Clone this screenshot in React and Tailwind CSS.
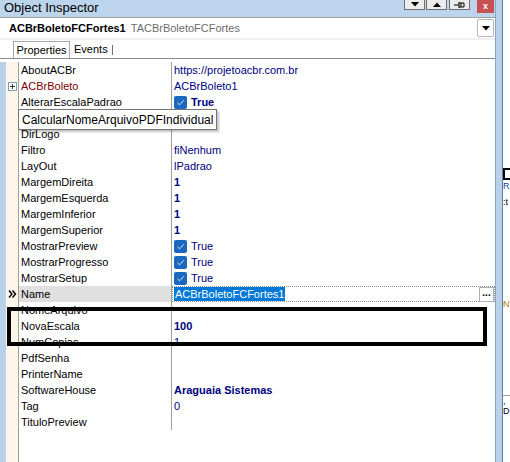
import React from 'react'

const font = { fontFamily: '"Liberation Sans", Arial, sans-serif' }

function Check({ bold }) {
  return (
    <span className="flex items-center gap-[4px]">
      <span className="w-[13px] h-[13px] rounded-[2px] bg-[#1a68c0] flex items-center justify-center">
        <svg width="9" height="9" viewBox="0 0 9 9">
          <path d="M1.5 4.8 L3.6 6.8 L7.6 2.4" stroke="#dfeaf7" strokeWidth="1" fill="none" />
        </svg>
      </span>
      <span className={bold ? 'font-bold' : ''}>True</span>
    </span>
  )
}

const rows = [
  { name: 'AboutACBr', value: 'https://projetoacbr.com.br' },
  { name: 'ACBrBoleto', value: 'ACBrBoleto1', red: true, plus: true },
  { name: 'AlterarEscalaPadrao', check: true, bold: true },
  { name: 'CalcularNomeArquivoPDFIndividual', hidden: true },
  { name: 'DirLogo' },
  { name: 'Filtro', value: 'fiNenhum' },
  { name: 'LayOut', value: 'lPadrao' },
  { name: 'MargemDireita', value: '1', bold: true },
  { name: 'MargemEsquerda', value: '1', bold: true },
  { name: 'MargemInferior', value: '1', bold: true },
  { name: 'MargemSuperior', value: '1', bold: true },
  { name: 'MostrarPreview', check: true },
  { name: 'MostrarProgresso', check: true },
  { name: 'MostrarSetup', check: true },
  { name: 'Name', value: 'ACBrBoletoFCFortes1', selected: true },
  { name: 'NomeArquivo' },
  { name: 'NovaEscala', value: '100', bold: true },
  { name: 'NumCopias', value: '1' },
  { name: 'PdfSenha' },
  { name: 'PrinterName' },
  { name: 'SoftwareHouse', value: 'Araguaia Sistemas', bold: true },
  { name: 'Tag', value: '0' },
  { name: 'TituloPreview' },
]

function Row({ r }) {
  return (
    <div className="flex h-[16px] text-[11px] leading-[16px]">
      <div className="w-[13px] shrink-0 bg-[#fdf6e9] border-r border-[#a0a0a0] flex items-center justify-center">
        {r.plus && (
          <svg width="9" height="9" viewBox="0 0 9 9">
            <rect x="0.5" y="0.5" width="8" height="8" fill="#fff" stroke="#7f9db9" />
            <path d="M2 4.5 H7 M4.5 2 V7" stroke="#333" />
          </svg>
        )}
        {r.selected && (
          <svg width="9" height="8" viewBox="0 0 9 8">
            <path d="M1 0.5 L4 4 L1 7.5 M4.5 0.5 L7.5 4 L4.5 7.5" stroke="#000" strokeWidth="1.4" fill="none" />
          </svg>
        )}
      </div>
      <div
        className={`w-[153px] shrink-0 pl-[2px] border-r border-[#a0a0a0] ${r.selected ? 'bg-[#e0e0e0]' : ''} ${r.red ? 'text-[#800000]' : 'text-black'} ${r.hidden ? 'invisible' : ''}`}
      >
        {r.name}
      </div>
      {r.selected ? (
        <div className="flex-1 flex items-center justify-between border border-dotted border-[#909090] pl-[1px]">
          <span className="bg-[#0078d7] text-white leading-[14px] px-[1px]">{r.value}</span>
          <span className="w-[15px] h-[15px] bg-white border border-[#b0b0b0] flex items-center justify-center font-bold text-black leading-none text-[10px] pb-[3px]">
            ...
          </span>
        </div>
      ) : (
        <div className={`flex-1 pl-[2px] text-[#000080] flex items-center ${r.bold ? 'font-bold' : ''}`}>
          {r.check ? <Check bold={r.bold} /> : r.value}
        </div>
      )}
    </div>
  )
}

export default function App() {
  return (
    <div className="relative w-[510px] h-[462px] bg-[#b9d1ea] flex overflow-hidden" style={font}>
      <div className="w-[496px] flex flex-col border-r border-[#8aa5c2]">
        {/* title bar */}
        <div className="h-[17px] flex items-start justify-between bg-[#bcd4ec]">
          <span className="pl-[4px] text-[13px] leading-[16px] text-black">Object Inspector</span>
          <div className="flex items-start pr-[1px]">
            <span className="w-[21px] h-[10px] bg-[#ececec] border border-t-0 border-[#6f6f6f] flex items-center justify-center">
              <svg width="8" height="5" viewBox="0 0 8 5"><path d="M0 0 H8 L4 4.5 Z" fill="#000" /></svg>
            </span>
            <span className="w-[21px] h-[10px] ml-[1px] bg-[#ececec] border border-t-0 border-[#6f6f6f] flex items-center justify-center">
              <svg width="8" height="5" viewBox="0 0 8 5"><path d="M0 5 H8 L4 0.5 Z" fill="#000" /></svg>
            </span>
            <span className="w-[21px] h-[10px] ml-[2px] bg-[#ececec] border border-t-0 border-[#6f6f6f] flex items-center justify-center">
              <svg width="12" height="8" viewBox="0 0 12 8"><path d="M0 4 H5 M5 1 V7 M5 2 H10 V6 H5 M7 2 V6" stroke="#000" fill="none" /></svg>
            </span>
            <span className="w-[17px] h-[13px] ml-[7px] bg-[#c75050] flex items-center justify-center text-white text-[9px] font-bold leading-none pb-[1px]">
              x
            </span>
          </div>
        </div>
        {/* component combo */}
        <div className="h-[21px] bg-white border-t border-[#a0a0a0] flex items-center justify-between text-[11px]">
          <span className="pl-[9px]">
            <span className="font-bold text-black">ACBrBoletoFCFortes1</span>
            <span className="text-[#6d6d6d] ml-[5px]">TACBrBoletoFCFortes</span>
          </span>
          <span className="w-[17px] h-[18px] mr-[1px] bg-white border border-[#b8b8b8] rounded-[2px] flex items-center justify-center">
            <svg width="8" height="5" viewBox="0 0 8 5"><path d="M0 0 H8 L4 4.5 Z" fill="#000" /></svg>
          </span>
        </div>
        <div className="h-[2px] bg-[#f0f0f0]" />
        {/* tabs */}
        <div className="h-[19px] bg-white flex items-end pl-[13px] text-[11px] border-b border-[#8c8c8c]">
          <span className="h-[17px] w-[57px] border border-b-0 border-[#a8a8a8] flex items-center justify-center">Properties</span>
          <span className="h-[17px] flex items-center pl-[4px] pr-[4px]">Events</span>
          <span className="h-[10px] mb-[3px] border-l border-[#707070]" />
        </div>
        {/* grid */}
        <div className="flex-1 flex bg-white pt-[3px]">
          <div className="w-[6px] bg-[#b9d1ea]" />
          <div className="flex-1 flex flex-col">
            {rows.map((r) => (
              <Row key={r.name} r={r} />
            ))}
            <div className="flex-1 flex">
              <div className="w-[13px] bg-[#fdf6e9] border-r border-[#a0a0a0]" />
              <div className="flex-1" />
            </div>
          </div>
        </div>
      </div>
      {/* neighbour window edge */}
      <div className="w-[6px] bg-[#b9d1ea]" />
      <div className="flex-1 bg-white border-l border-[#5a7ea8] flex flex-col text-[9px] leading-[10px]">
        <div className="h-[168px]" />
        <div className="h-[12px] border-2 border-black border-r-0" />
        <div className="text-[#1a3fa0] mt-[1px]">R</div>
        <div className="mt-[6px]">:t</div>
        <div className="mt-[92px] text-[#b08000]">N</div>
        <div className="mt-[86px] border-t border-[#a0a0a0]" />
        <div>,</div>
        <div>D</div>
      </div>
      {/* tooltip */}
      <div className="absolute left-[18px] top-[109px] h-[21px] px-[3px] bg-white border border-[#767676] shadow-[2px_2px_2px_rgba(0,0,0,0.25)] flex items-center text-[12px] text-black">
        CalcularNomeArquivoPDFIndividual
      </div>
      {/* annotation box */}
      <div className="absolute left-[7px] top-[307px] w-[480px] h-[39px] border-[4px] border-black" />
    </div>
  )
}
